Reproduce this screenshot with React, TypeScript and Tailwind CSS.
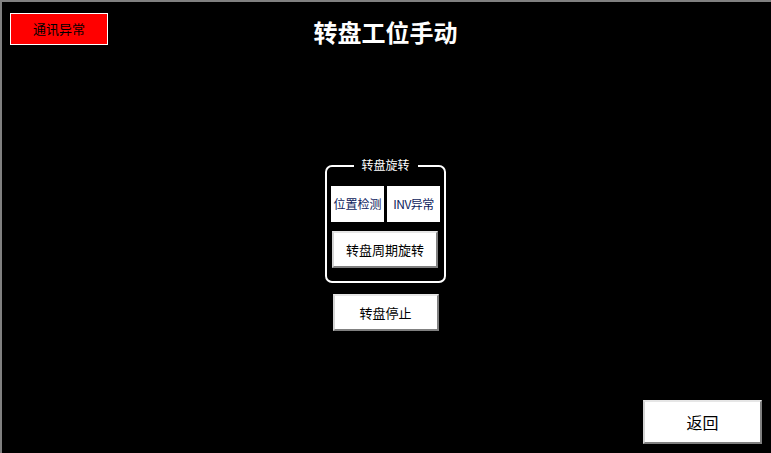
import React from "react";

const cjk = "font-['SimSun','Noto_Sans_CJK_SC',sans-serif]";

function BevelButton({ label, className }: { label: string; className?: string }) {
  return (
    <button
      className={`flex items-center justify-center bg-white text-black border-2 border-t-[#e6e6e6] border-l-[#d4d4d4] border-r-[#808080] border-b-[#808080] ${className ?? ""}`}
    >
      {label}
    </button>
  );
}

export default function App() {
  return (
    <div className={`w-[771px] h-[453px] bg-black border-t-2 border-l-2 border-[#808080] flex flex-col ${cjk}`}>
      {/* header */}
      <div className="grid grid-cols-[1fr_auto_1fr] items-start">
        <div className="mt-[11px] ml-[8px] w-[98px] h-[32px] bg-[#ff0000] border border-white flex items-center justify-center text-[13px] text-black">
          通讯异常
        </div>
        <h1 className="mt-[15px] text-[24px] leading-[30px] font-bold text-white -ml-[2px]">转盘工位手动</h1>
        <div />
      </div>

      {/* rotation group */}
      <div className="mt-[118px] flex flex-col items-center -ml-[2px]">
        <div className="relative w-[121px] h-[118px] border-2 border-white rounded-[7px] pt-[19px] px-[4px]">
          <span className="absolute left-1/2 -translate-x-1/2 -top-[10px] bg-black px-[8px] text-[12px] leading-[16px] text-white whitespace-nowrap">
            转盘旋转
          </span>
          <div className="flex gap-[3px]">
            <div className="w-[53px] h-[36px] bg-white flex items-center justify-center text-[12px] text-[#0c1a5c]">位置检测</div>
            <div className="w-[53px] h-[36px] bg-white flex items-center justify-center text-[12px] text-[#0c1a5c] tracking-[-0.5px]">INV异常</div>
          </div>
          <BevelButton label="转盘周期旋转" className="mt-[9px] ml-[1px] w-[106px] h-[37px] text-[13px]" />
        </div>
        <BevelButton label="转盘停止" className="mt-[11px] w-[106px] h-[37px] text-[13px]" />
      </div>

      <div className="flex-1" />
      <div className="flex justify-end">
        <BevelButton label="返回" className="mr-[9px] mb-[9px] w-[119px] h-[44px] text-[16px]" />
      </div>
    </div>
  );
}
